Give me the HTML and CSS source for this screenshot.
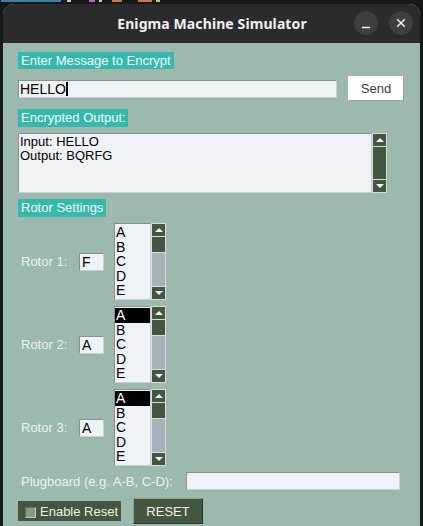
FILE: index.html
```html
<!DOCTYPE html>
<html>
<head>
<meta charset="utf-8">
<link rel="stylesheet" href="styles.css">
</head>
<body>
<div class="code-strip">
  <span class="frag f1"></span><span class="frag f2"></span><span class="frag f3"></span><span class="frag f4"></span><span class="frag f5"></span><span class="frag f6"></span><span class="frag f7"></span>
</div>
<div class="window">
  <div class="titlebar">
    <div class="title">Enigma Machine Simulator</div>
    <div class="wbtns">
      <span class="wbtn"><svg width="24" height="24" viewBox="0 0 24 24"><path d="M8 16.5h8" stroke="#f2f2f2" stroke-width="1.4"/></svg></span>
      <span class="wbtn"><svg width="24" height="24" viewBox="0 0 24 24"><path d="M8.2 8.2l7.6 7.6M15.8 8.2l-7.6 7.6" stroke="#f2f2f2" stroke-width="1.5"/></svg></span>
    </div>
  </div>
  <div class="content">
    <div class="section-label lbl-msg">Enter Message to Encrypt</div>
    <div class="msg-row">
      <div class="entry msg-entry">HELLO<span class="caret"></span></div>
      <div class="send-btn">Send</div>
    </div>
    <div class="section-label lbl-out">Encrypted Output:</div>
    <div class="out-row">
      <div class="textbox">Input: HELLO<br>Output: BQRFG</div>
      <div class="vscroll tall">
        <div class="arrow up"></div>
        <div class="thumb full"></div>
        <div class="arrow down"></div>
      </div>
    </div>
    <div class="section-label lbl-rot">Rotor Settings</div>

    <div class="rotor-row">
      <div class="rotor-label">Rotor 1:</div>
      <div class="entry small-entry">F</div>
      <div class="listbox">
        <div class="item">A</div><div class="item">B</div><div class="item">C</div><div class="item">D</div><div class="item">E</div>
      </div>
      <div class="vscroll">
        <div class="arrow up"></div>
        <div class="thumb"></div>
        <div class="trough"></div>
        <div class="arrow down"></div>
      </div>
    </div>

    <div class="rotor-row">
      <div class="rotor-label">Rotor 2:</div>
      <div class="entry small-entry">A</div>
      <div class="listbox">
        <div class="item sel">A</div><div class="item">B</div><div class="item">C</div><div class="item">D</div><div class="item">E</div>
      </div>
      <div class="vscroll">
        <div class="arrow up"></div>
        <div class="thumb"></div>
        <div class="trough"></div>
        <div class="arrow down"></div>
      </div>
    </div>

    <div class="rotor-row">
      <div class="rotor-label">Rotor 3:</div>
      <div class="entry small-entry">A</div>
      <div class="listbox">
        <div class="item sel">A</div><div class="item">B</div><div class="item">C</div><div class="item">D</div><div class="item">E</div>
      </div>
      <div class="vscroll">
        <div class="arrow up"></div>
        <div class="thumb"></div>
        <div class="trough"></div>
        <div class="arrow down"></div>
      </div>
    </div>

    <div class="plug-row">
      <div class="plug-label">Plugboard (e.g. A-B, C-D):</div>
      <div class="entry plug-entry"></div>
    </div>

    <div class="bottom-row">
      <div class="check"><span class="box"></span><span>Enable Reset</span></div>
      <div class="reset-btn">RESET</div>
    </div>
  </div>
</div>
</body>
</html>
```

FILE: styles.css
```css
* { box-sizing: border-box; }
html, body { margin: 0; padding: 0; }
body {
  background: #151a18;
  width: 423px;
  height: 526px;
  overflow: hidden;
  font-family: "Liberation Sans", Arial, sans-serif;
}
.code-strip {
  height: 4px;
  display: flex;
  align-items: flex-start;
  gap: 4px;
  padding-left: 1px;
}
.frag { display: block; height: 2px; }
.f1 { width: 60px; background: #3d7fb0; }
.f2 { width: 4px; background: #c8c8c8; margin-left: 2px; }
.f3 { width: 6px; background: #b968c7; margin-left: 14px; }
.f4 { width: 3px; background: #c8c8c8; }
.f5 { width: 10px; background: #c9784e; margin-left: 6px; }
.f6 { width: 14px; background: #c9784e; margin-left: 12px; }
.f7 { width: 4px; background: #d7ba7d; }

.window {
  margin-left: 3px;
  width: 417px;
  height: 522px;
  border-radius: 11px 11px 0 0;
  overflow: hidden;
  background: #9db8ad;
}
.titlebar {
  height: 39px;
  background: #2b2b2e;
  display: flex;
  align-items: center;
  justify-content: center;
  position: relative;
}
.title {
  color: #f2f2f2;
  font-family: "Noto Sans", "DejaVu Sans", sans-serif;
  font-weight: 700;
  font-size: 14px;
  letter-spacing: 0.1px;
  margin-left: 1px;
}
.wbtns {
  position: absolute;
  right: 7px;
  top: 7px;
  display: flex;
  gap: 11px;
}
.wbtn {
  width: 24px;
  height: 24px;
  border-radius: 50%;
  background: #3e3e41;
  display: block;
}
.wbtn svg { display: block; }

.content {
  padding: 9px 0 0 15px;
  display: flex;
  flex-direction: column;
  align-items: flex-start;
}
.section-label {
  background: #35b9ad;
  color: #f4faf8;
  font-size: 13px;
  height: 18px;
  line-height: 18px;
  padding: 0 2px 0 3px;
  white-space: nowrap;
}
.lbl-msg { width: 156px; height: 17px; line-height: 17px; }
.lbl-out { width: 110px; }
.lbl-rot { width: 88px; }

.entry {
  background: #eff2f7;
  border: 1px solid #8b8f8f;
  border-right-color: #c9d0cf;
  border-bottom-color: #c9d0cf;
  color: #000;
  font-size: 14px;
  line-height: 16px;
  padding: 0 2px;
  white-space: nowrap;
}
.msg-row {
  display: flex;
  align-items: center;
  margin-top: 7px;
  height: 25px;
}
.msg-entry {
  width: 319px;
  height: 18px;
  padding-left: 1px;
  display: flex;
  align-items: center;
}
.caret {
  display: inline-block;
  width: 2px;
  height: 14px;
  background: #000;
}
.send-btn {
  margin-left: 11px;
  width: 56px;
  height: 25px;
  background: #ffffff;
  border: 1px solid #ffffff;
  border-right-color: #9a9e9d;
  border-bottom-color: #9a9e9d;
  color: #3a3a3a;
  font-size: 13px;
  display: flex;
  align-items: center;
  justify-content: center;
}
.lbl-out { margin-top: 8px; }

.out-row {
  display: flex;
  margin-top: 6px;
}
.textbox {
  width: 354px;
  height: 60px;
  background: #eff2f7;
  border: 1px solid #8b8f8f;
  border-right-color: #c9d0cf;
  border-bottom-color: #c9d0cf;
  font-size: 13px;
  line-height: 14px;
  padding: 1px 1px;
  color: #000;
}
.vscroll {
  width: 15px;
  display: flex;
  flex-direction: column;
  border: 1px solid #d6dedb;
  background: #a7b1ba;
}
.vscroll.tall { height: 60px; }
.arrow {
  height: 13px;
  background: #435640;
  position: relative;
  border-bottom: 1px solid #d6dedb;
}
.arrow.down { border-bottom: none; border-top: 1px solid #d6dedb; }
.arrow::after {
  content: "";
  position: absolute;
  left: 3px;
  width: 0;
  height: 0;
  border-left: 4px solid transparent;
  border-right: 4px solid transparent;
}
.arrow.up::after { top: 4px; border-bottom: 4px solid #f4f4f4; }
.arrow.down::after { top: 4px; border-top: 4px solid #f4f4f4; }
.thumb {
  background: #435640;
  height: 16px;
  border-bottom: 1px solid #d6dedb;
}
.thumb.full { flex: 1; border-bottom: none; }
.trough { flex: 1; }

.lbl-rot { margin-top: 6px; }

.rotor-row {
  display: flex;
  align-items: center;
  margin-top: 6px;
  height: 77px;
}
.rotor-label {
  width: 61px;
  padding-left: 3px;
  color: #eef3ee;
  font-size: 13px;
  white-space: nowrap;
}
.small-entry {
  width: 25px;
  height: 18px;
}
.listbox {
  margin-left: 10px;
  width: 37px;
  height: 77px;
  background: #eff2f7;
  border: 1px solid #8b8f8f;
  border-right-color: #c9d0cf;
  border-bottom-color: #c9d0cf;
  padding-top: 1px;
  overflow: hidden;
}
.item {
  font-size: 14px;
  line-height: 14.6px;
  height: 14.6px;
  padding-left: 1px;
  color: #000;
}
.item.sel { background: #000; color: #fff; }
.rotor-row .vscroll { height: 77px; }

.plug-row {
  display: flex;
  align-items: center;
  margin-top: 6px;
  height: 18px;
}
.plug-label {
  width: 168px;
  padding-left: 3px;
  color: #eef3ee;
  font-size: 13px;
  white-space: nowrap;
}
.plug-entry {
  width: 214px;
  height: 18px;
}

.bottom-row {
  display: flex;
  align-items: center;
  margin-top: 8px;
}
.check {
  width: 103px;
  height: 20px;
  background: #435640;
  color: #eef3ee;
  font-size: 13px;
  display: flex;
  align-items: center;
  padding-left: 7px;
  white-space: nowrap;
}
.box {
  width: 11px;
  height: 11px;
  background: #8a9889;
  border: 1px solid #5e6b5d;
  border-right-color: #c0cabf;
  border-bottom-color: #c0cabf;
  margin-right: 4px;
  margin-top: 2px;
}
.reset-btn {
  margin-left: 12px;
  width: 70px;
  height: 26px;
  background: #435640;
  border: 1px solid #8fa18c;
  border-right-color: #2b3829;
  border-bottom-color: #2b3829;
  color: #f0f4ec;
  font-size: 13px;
  display: flex;
  align-items: center;
  justify-content: center;
}
```
